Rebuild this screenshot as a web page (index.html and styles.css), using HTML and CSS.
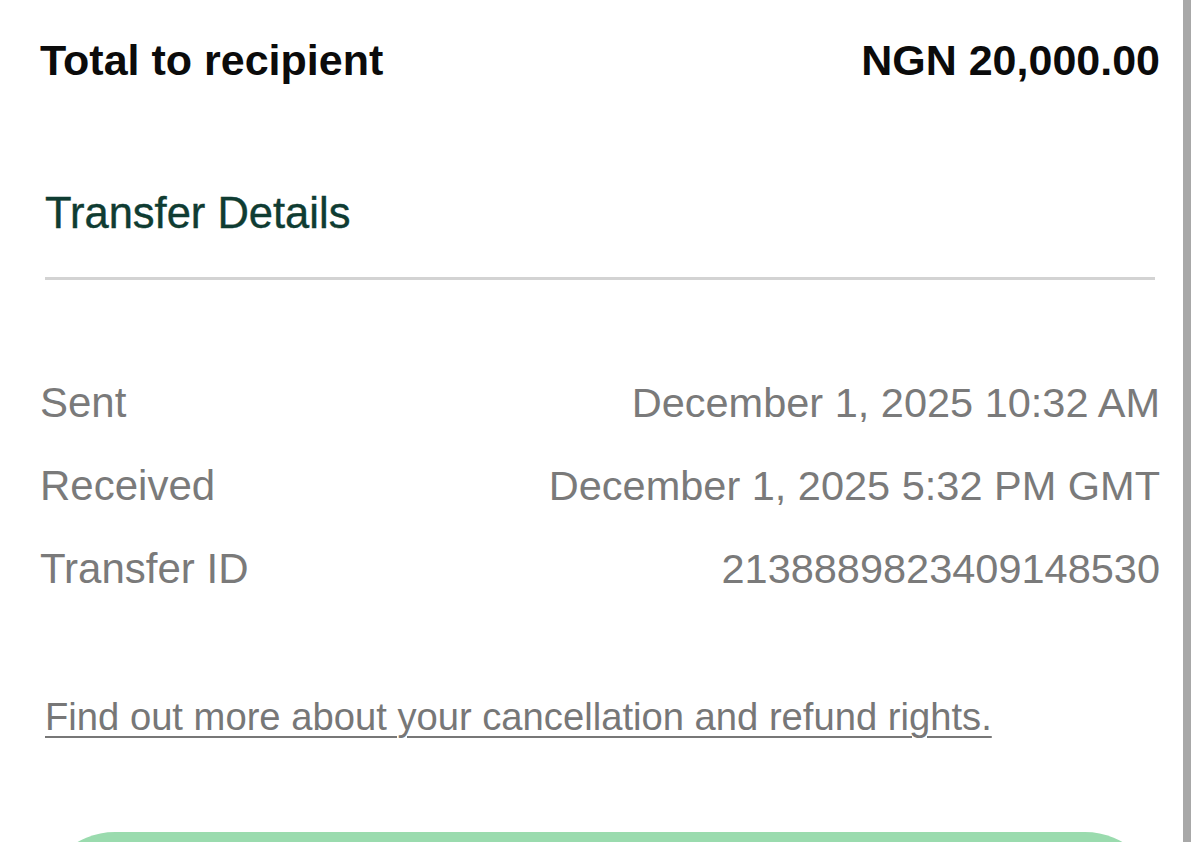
FILE: index.html
```html
<!DOCTYPE html>
<html lang="en">
<head>
    <meta charset="UTF-8">
    <meta name="viewport" content="width=device-width, initial-scale=1.0">
    <title>Transfer Details</title>
    <link rel="stylesheet" href="styles.css">
</head>
<body>
    <main class="receipt">
        <div class="total-row">
            <span class="total-label">Total to recipient</span>
            <span class="total-amount">NGN 20,000.00</span>
        </div>

        <section class="details">
            <h2 class="details-title">Transfer Details</h2>
            <hr class="divider">

            <div class="detail-row">
                <span class="detail-label">Sent</span>
                <span class="detail-value">December 1, 2025 10:32 AM</span>
            </div>
            <div class="detail-row">
                <span class="detail-label">Received</span>
                <span class="detail-value">December 1, 2025 5:32 PM GMT</span>
            </div>
            <div class="detail-row">
                <span class="detail-label">Transfer ID</span>
                <span class="detail-value">2138889823409148530</span>
            </div>

            <a class="refund-link" href="#">Find out more about your cancellation and refund rights.</a>
        </section>

        <button class="primary-btn" type="button"></button>
    </main>
    <div class="edge"></div>
</body>
</html>
```

FILE: styles.css
```css
body {
    margin: 0;
    background: #ffffff;
    font-family: 'Liberation Sans', Arial, sans-serif;
    display: flex;
    height: 842px;
    overflow: hidden;
}

.receipt {
    width: 1183px;
    height: 842px;
    overflow: hidden;
    box-sizing: border-box;
    padding: 35px 23px 0 40px;
}

.edge {
    width: 8px;
    background: #a8a8a8;
}

.total-row {
    display: flex;
    justify-content: space-between;
    font-size: 43px;
    line-height: 50px;
    font-weight: 700;
    color: #0b0b0b;
}

.details-title {
    margin: 103px 0 0 5px;
    font-size: 43.5px;
    line-height: 50px;
    font-weight: 400;
    color: #0f3c32;
    -webkit-text-stroke: 0.4px #0f3c32;
}

.divider {
    margin: 39px 5px 0 5px;
    border: 0;
    height: 3px;
    background: #d3d3d3;
}

.detail-row {
    display: flex;
    justify-content: space-between;
    align-items: baseline;
    font-size: 42px;
    line-height: 83px;
    color: #7a7a7a;
}

.detail-row:first-of-type {
    margin-top: 81px;
}

.detail-value {
    font-size: 41.5px;
}

.refund-link {
    display: block;
    margin: 82px 0 0 5px;
    font-size: 38.2px;
    line-height: 50px;
    color: #777777;
    text-decoration: underline;
    text-decoration-thickness: 2px;
    text-underline-offset: 6px;
}

.primary-btn {
    display: block;
    width: 100%;
    height: 150px;
    margin-top: 90px;
    border: 0;
    border-radius: 75px;
    background: #9adbae;
}
```
